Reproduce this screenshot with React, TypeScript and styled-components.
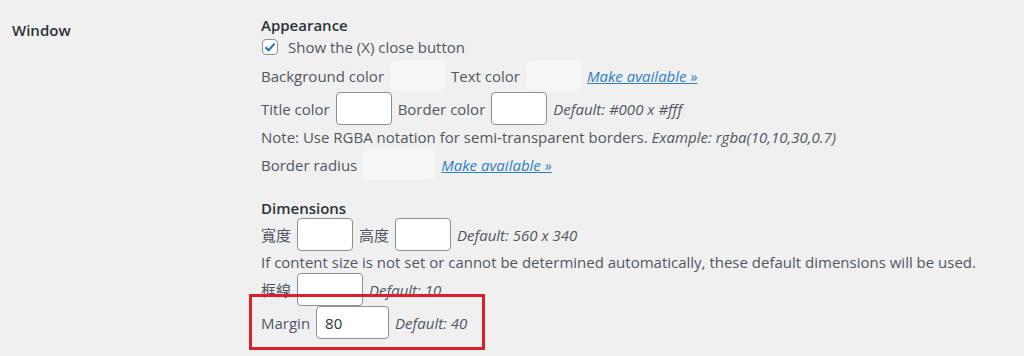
import styled, { createGlobalStyle } from "styled-components";

const Global = createGlobalStyle`
  body {
    margin: 0;
    background: #f0f0f1;
    font-family: "Open Sans", "Noto Sans CJK TC", sans-serif;
    font-size: 15px;
    color: #50575e;
  }
`;

const Page = styled.div`
  position: relative;
  width: 1024px;
  height: 356px;
  overflow: hidden;
  display: grid;
  grid-template-columns: 249px 1fr;
`;

const Th = styled.div`
  padding: 20px 0 0 12px;
  font-weight: 600;
  color: #2c3338;
`;

const Td = styled.div`
  padding: 15px 0 0 12px;
  display: flex;
  flex-direction: column;
`;

const Heading = styled.div<{ $top?: number }>`
  font-weight: 600;
  color: #2c3338;
  line-height: 20px;
  margin-top: ${(p) => p.$top ?? 0}px;
`;

const Row = styled.div<{ $h: number }>`
  display: flex;
  align-items: center;
  gap: 6px;
  height: ${(p) => p.$h}px;
  white-space: nowrap;
`;

const Line = styled.div<{ $h: number }>`
  height: ${(p) => p.$h}px;
  line-height: ${(p) => p.$h}px;
  white-space: nowrap;
`;

const Box = styled.span`
  width: 16px;
  height: 16px;
  border: 1px solid #8c8f94;
  border-radius: 4px;
  background: #fff;
  box-sizing: border-box;
  display: inline-flex;
  align-items: center;
  justify-content: center;
  margin: 0 4px 0 1px;
`;

const Field = styled.input<{ $w: number; $off?: boolean }>`
  width: ${(p) => p.$w}px;
  height: ${(p) => (p.$off ? 31 : 33)}px;
  box-sizing: border-box;
  border: 1px solid ${(p) => (p.$off ? "#f3f3f3" : "#8c8f94")};
  background: ${(p) => (p.$off ? "#f6f6f6" : "#fff")};
  border-radius: 4px;
  padding: 0 8px;
  font: inherit;
  color: #2c3338;
  margin: 0;
`;

const Hint = styled.em`
  font-style: italic;
  color: #50575e;
`;

const Link = styled.a`
  font-style: italic;
  color: #2f80bd;
  text-decoration: underline;
`;

const Highlight = styled.div`
  position: absolute;
  left: 249px;
  top: 294px;
  width: 236px;
  height: 56px;
  box-sizing: border-box;
  border: 3px solid #dc1f2c;
  pointer-events: none;
`;

export default function App() {
  return (
    <>
      <Global />
      <Page>
        <Th>Window</Th>
        <Td>
          <Heading>Appearance</Heading>
          <Row $h={24}>
            <Box>
              <svg width="12" height="12" viewBox="0 0 12 12">
                <path d="M1.5 6.2 L4.6 9.2 L10.6 2.6" fill="none" stroke="#2271b1" strokeWidth="2" />
              </svg>
            </Box>
            Show the (X) close button
          </Row>
          <Row $h={33}>
            Background color <Field $w={55} $off readOnly /> Text color <Field $w={55} $off readOnly />
            <Link>Make available »</Link>
          </Row>
          <Row $h={33}>
            Title color <Field $w={56} readOnly /> Border color <Field $w={56} readOnly />
            <Hint>Default: #000 x #fff</Hint>
          </Row>
          <Line $h={24}>
            Note: Use RGBA notation for semi-transparent borders. <Hint>Example: rgba(10,10,30,0.7)</Hint>
          </Line>
          <Row $h={31}>
            Border radius <Field $w={72} $off readOnly />
            <Link>Make available »</Link>
          </Row>
          <Heading $top={18}>Dimensions</Heading>
          <Row $h={33}>
            寬度 <Field $w={56} readOnly /> 高度 <Field $w={56} readOnly />
            <Hint>Default: 560 x 340</Hint>
          </Row>
          <Line $h={22}>
            If content size is not set or cannot be determined automatically, these default dimensions will be used.
          </Line>
          <Row $h={33}>
            框線 <Field $w={66} readOnly />
            <Hint>Default: 10</Hint>
          </Row>
          <Row $h={33}>
            Margin <Field $w={73} defaultValue="80" readOnly />
            <Hint>Default: 40</Hint>
          </Row>
        </Td>
        <Highlight />
      </Page>
    </>
  );
}
